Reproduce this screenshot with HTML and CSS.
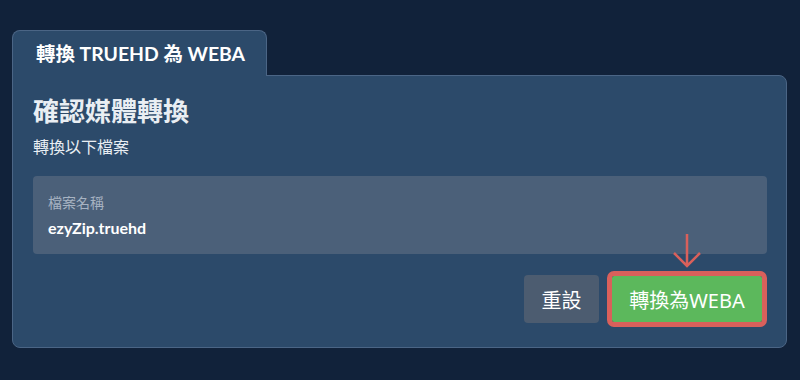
FILE: index.html
```html
<!DOCTYPE html>
<html lang="zh-Hant">
<head>
    <meta charset="UTF-8">
    <meta name="viewport" content="width=device-width, initial-scale=1.0">
    <title>轉換 TRUEHD 為 WEBA</title>
    <link rel="stylesheet" href="styles.css">
</head>
<body>
    <div class="wrap">
        <div class="tab">轉換 TRUEHD 為 WEBA</div>
        <div class="panel">
            <h2>確認媒體轉換</h2>
            <p class="sub">轉換以下檔案</p>
            <div class="file-box">
                <div class="file-label">檔案名稱</div>
                <div class="file-name">ezyZip.truehd</div>
            </div>
            <div class="actions">
                <button class="btn btn-reset">重設</button>
                <div class="convert-wrap">
                    <svg class="arrow" width="30" height="36" viewBox="0 0 30 36">
                        <path d="M15 1 V33 M2 20 L15 33 L28 20" fill="none" stroke="#d9605b" stroke-width="2.5"/>
                    </svg>
                    <button class="btn btn-convert">轉換為WEBA</button>
                </div>
            </div>
        </div>
    </div>
</body>
</html>
```

FILE: styles.css
```css
body {
    margin: 0;
    background-color: #11223a;
    font-family: Lato, "Noto Sans CJK TC", sans-serif;
    color: #fff;
}
.wrap {
    padding: 30px 13px 0 12px;
}
.tab {
    display: inline-block;
    background-color: #2c4a6a;
    border: 1px solid #4b6585;
    border-bottom: none;
    border-radius: 8px 8px 0 0;
    padding: 12px 21px 11px 23px;
    font-size: 19.4px;
    font-weight: bold;
    line-height: 22px;
    position: relative;
    z-index: 1;
    margin-bottom: -1px;
}
.panel {
    background-color: #2c4a6a;
    border: 1px solid #4b6585;
    border-radius: 0 8px 8px 8px;
    padding: 20px 19px 24px 20px;
}
.panel h2 {
    margin: 0;
    font-size: 26px;
    line-height: 30px;
    font-weight: bold;
    color: #e9eef3;
}
.sub {
    margin: 10px 0 0;
    font-size: 16px;
    line-height: 22px;
    color: #e9eef3;
}
.file-box {
    margin-top: 18px;
    background-color: #4b6079;
    border-radius: 4px;
    padding: 18px 15px 16px 15px;
    height: 44px;
}
.file-label {
    font-size: 14px;
    line-height: 18px;
    color: #a7b3c2;
}
.file-name {
    margin-top: 6px;
    font-size: 16px;
    font-weight: bold;
    line-height: 20px;
}
.actions {
    display: flex;
    justify-content: flex-end;
    align-items: center;
    margin-top: 21px;
}
.btn {
    font-family: "Noto Sans", "Noto Sans CJK TC", sans-serif;
    font-size: 20px;
    color: #fff;
    border: none;
    border-radius: 4px;
    cursor: pointer;
}
.btn-reset {
    width: 75px;
    height: 48px;
    background-color: #4c5c70;
    margin-right: 13px;
}
.convert-wrap {
    position: relative;
    margin-right: 5px;
}
.btn-convert {
    width: 150px;
    height: 46px;
    background-color: #5cb85c;
    outline: 5px solid #d9605b;
    border-radius: 2px;
    display: block;
}
.arrow {
    position: absolute;
    left: 60px;
    top: -43px;
}
```
